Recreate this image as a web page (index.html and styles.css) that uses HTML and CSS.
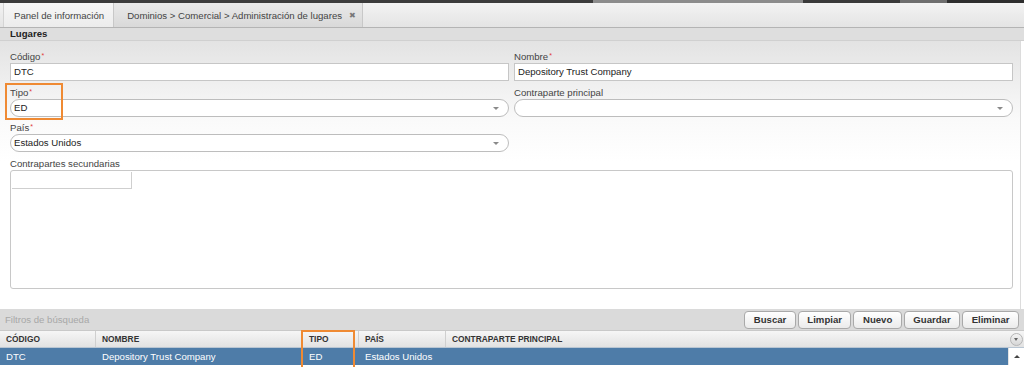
FILE: index.html
```html
<!DOCTYPE html>
<html lang="es">
  <head>
    <meta charset="UTF-8" />
    <title>Administración de lugares</title>
    <link rel="stylesheet" href="styles.css">
  </head>
  <body>
    <div class="topbar"></div>

    <div class="tabs">
      <div class="tab">Panel de información</div>
      <div class="tab tab-current">
        Dominios &gt; Comercial &gt; Administración de lugares
        <span class="tab-close">✖</span>
      </div>
    </div>

    <div class="section-title">Lugares</div>

    <div class="form">
      <div class="field">
        <label>Código<span class="req">*</span></label>
        <div class="input">DTC</div>
      </div>
      <div class="field">
        <label>Nombre<span class="req">*</span></label>
        <div class="input">Depository Trust Company</div>
      </div>

      <div class="field">
        <div class="mark mark-tipo"></div>
        <label>Tipo<span class="req">*</span></label>
        <div class="select">ED<span class="arrow"></span></div>
      </div>
      <div class="field">
        <label>Contraparte principal</label>
        <div class="select"><span class="arrow"></span></div>
      </div>

      <div class="field">
        <label>País<span class="req">*</span></label>
        <div class="select">Estados Unidos<span class="arrow"></span></div>
      </div>
      <div class="field"></div>

      <div class="field field-wide">
        <label>Contrapartes secundarias</label>
        <div class="listbox">
          <div class="listbox-entry"></div>
        </div>
      </div>
    </div>

    <div class="filters">
      <span class="filters-title">Filtros de búsqueda</span>
      <div class="actions">
        <button>Buscar</button>
        <button>Limpiar</button>
        <button>Nuevo</button>
        <button>Guardar</button>
        <button>Eliminar</button>
      </div>
    </div>

    <div class="grid">
      <div class="mark mark-col"></div>
      <div class="grid-row grid-head">
        <div class="cell">Código</div>
        <div class="cell">Nombre</div>
        <div class="cell">Tipo</div>
        <div class="cell">País</div>
        <div class="cell">Contraparte principal</div>
        <div class="cell cell-tool"><span class="menu-btn"></span></div>
      </div>
      <div class="grid-row grid-selected">
        <div class="cell">DTC</div>
        <div class="cell">Depository Trust Company</div>
        <div class="cell">ED</div>
        <div class="cell">Estados Unidos</div>
        <div class="cell"></div>
        <div class="cell cell-tool scroll"><span class="up"></span></div>
      </div>
    </div>
  </body>
</html>
```

FILE: styles.css
```css
body {
  margin: 0;
  font-family: "Liberation Sans", Arial, sans-serif;
  font-size: 9.6px;
  color: #333;
  background: #fff;
  width: 1024px;
  height: 367px;
  overflow: hidden;
}

.topbar {
  height: 3px;
  background: linear-gradient(
    90deg,
    #3c3c3c 0,
    #3c3c3c 593px,
    #8c8c8c 593px,
    #8c8c8c 803px,
    #3a3a3a 803px,
    #3a3a3a 900px,
    #6e6e6e 900px,
    #6e6e6e 947px,
    #2e2e2e 947px
  );
}

/* Tab strip */
.tabs {
  display: flex;
  height: 24px;
  padding-left: 3px;
  background: linear-gradient(#f3f3f3, #e4e4e4);
  border-bottom: 1px solid #b4b4b4;
}
.tab {
  display: flex;
  align-items: center;
  padding: 0 9px 0 10px;
  color: #444;
  background: linear-gradient(#f7f7f7, #ececec);
  border-left: 1px solid #d4d4d4;
  border-right: 1px solid #c8c8c8;
}
.tab-current {
  padding: 0 6px 0 13px;
  background: linear-gradient(#e9e9e9, #d9d9d9);
  border-left: none;
}
.tab-close {
  margin-left: 7px;
  font-size: 8px;
  color: #777;
}

.section-title {
  height: 12px;
  line-height: 12px;
  padding-left: 10px;
  font-weight: bold;
  color: #222;
  background: #dedede;
  border-bottom: 1px solid #d0d0d0;
}

/* Form */
.form {
  display: grid;
  grid-template-columns: 499px 499px;
  align-content: start;
  column-gap: 5px;
  row-gap: 5.5px;
  width: 1003px;
  height: 258px;
  padding: 10px 7px 0 10px;
  border-right: 1px solid #dcdcdc;
  background: linear-gradient(#e3e3e3, #fafafa 80px, #fff 120px);
}
.field {
  position: relative;
  display: flex;
  flex-direction: column;
}
.field-wide {
  grid-column: 1 / 3;
}
label {
  height: 12px;
  line-height: 12px;
  color: #444;
}
.req {
  color: #e03a3a;
  font-size: 7px;
  vertical-align: top;
  margin-left: 1px;
  line-height: 9px;
}
.input,
.select {
  position: relative;
  box-sizing: border-box;
  height: 18px;
  line-height: 16px;
  padding-left: 3px;
  color: #222;
  background: #fff;
  border: 1px solid #c6c6c6;
}
.select {
  border-radius: 9px;
  border-color: #bdbdbd;
}
.arrow {
  position: absolute;
  right: 9px;
  top: 7px;
  border-left: 3px solid transparent;
  border-right: 3px solid transparent;
  border-top: 3px solid #8a8a8a;
}
.listbox {
  box-sizing: border-box;
  height: 119px;
  padding: 1px;
  background: #fff;
  border: 1px solid #c8c8c8;
  border-radius: 3px;
}
.listbox-entry {
  width: 119px;
  height: 16px;
  border-right: 1px solid #cfcfcf;
  border-bottom: 1px solid #cfcfcf;
}

/* Highlight marks */
.mark {
  position: absolute;
  border: 2px solid #ef8a33;
  z-index: 2;
}
.mark-tipo {
  left: -5px;
  top: -3.5px;
  width: 54px;
  height: 33px;
}
.mark-col {
  left: 301px;
  top: 0;
  width: 50px;
  height: 40px;
}

/* Search bar with buttons */
.filters {
  display: flex;
  align-items: center;
  justify-content: space-between;
  height: 21px;
  padding-left: 5px;
  background: #dadada;
}
.filters-title {
  color: #a8a8a8;
}
.actions {
  display: flex;
  gap: 2px;
  padding-right: 5px;
}
button {
  box-sizing: border-box;
  height: 18px;
  padding: 0 8.5px;
  font-family: inherit;
  font-size: 9.6px;
  font-weight: bold;
  color: #333;
  background: linear-gradient(#ffffff, #ebebeb);
  border: 1px solid #a9a9a9;
  border-radius: 4px;
}

/* Result grid */
.grid {
  position: relative;
}
.grid-row {
  display: grid;
  grid-template-columns: 96px 207px 56px 87px 562px 16px;
  height: 17px;
}
.cell {
  box-sizing: border-box;
  padding-left: 6px;
  line-height: 17px;
  white-space: nowrap;
  overflow: hidden;
}
.grid-head {
  background: linear-gradient(#f6f6f6, #e2e2e2);
  border-top: 1px solid #c9c9c9;
  border-bottom: 1px solid #b9c6d3;
  height: 16px;
}
.grid-head .cell {
  line-height: 16px;
  font-size: 8.4px;
  font-weight: bold;
  text-transform: uppercase;
  color: #333;
  border-right: 1px solid #cfcfcf;
}
.grid-head .cell:nth-child(5),
.grid-head .cell-tool {
  border-right: none;
}
.grid-selected {
  background: #4e7ca8;
  color: #fff;
}
.cell-tool {
  display: flex;
  align-items: center;
  justify-content: center;
  padding: 0;
}
.menu-btn {
  position: relative;
  width: 11px;
  height: 11px;
  border-radius: 50%;
  background: linear-gradient(#f4f4f4, #d6d6d6);
  border: 1px solid #b5b5b5;
}
.menu-btn::after {
  content: "";
  position: absolute;
  left: 3px;
  top: 4px;
  border-left: 2.5px solid transparent;
  border-right: 2.5px solid transparent;
  border-top: 3px solid #666;
}
.scroll {
  background: #fff;
  border-left: 1px solid #e3e3e3;
}
.up {
  border-left: 3px solid transparent;
  border-right: 3px solid transparent;
  border-bottom: 3px solid #444;
}
```
